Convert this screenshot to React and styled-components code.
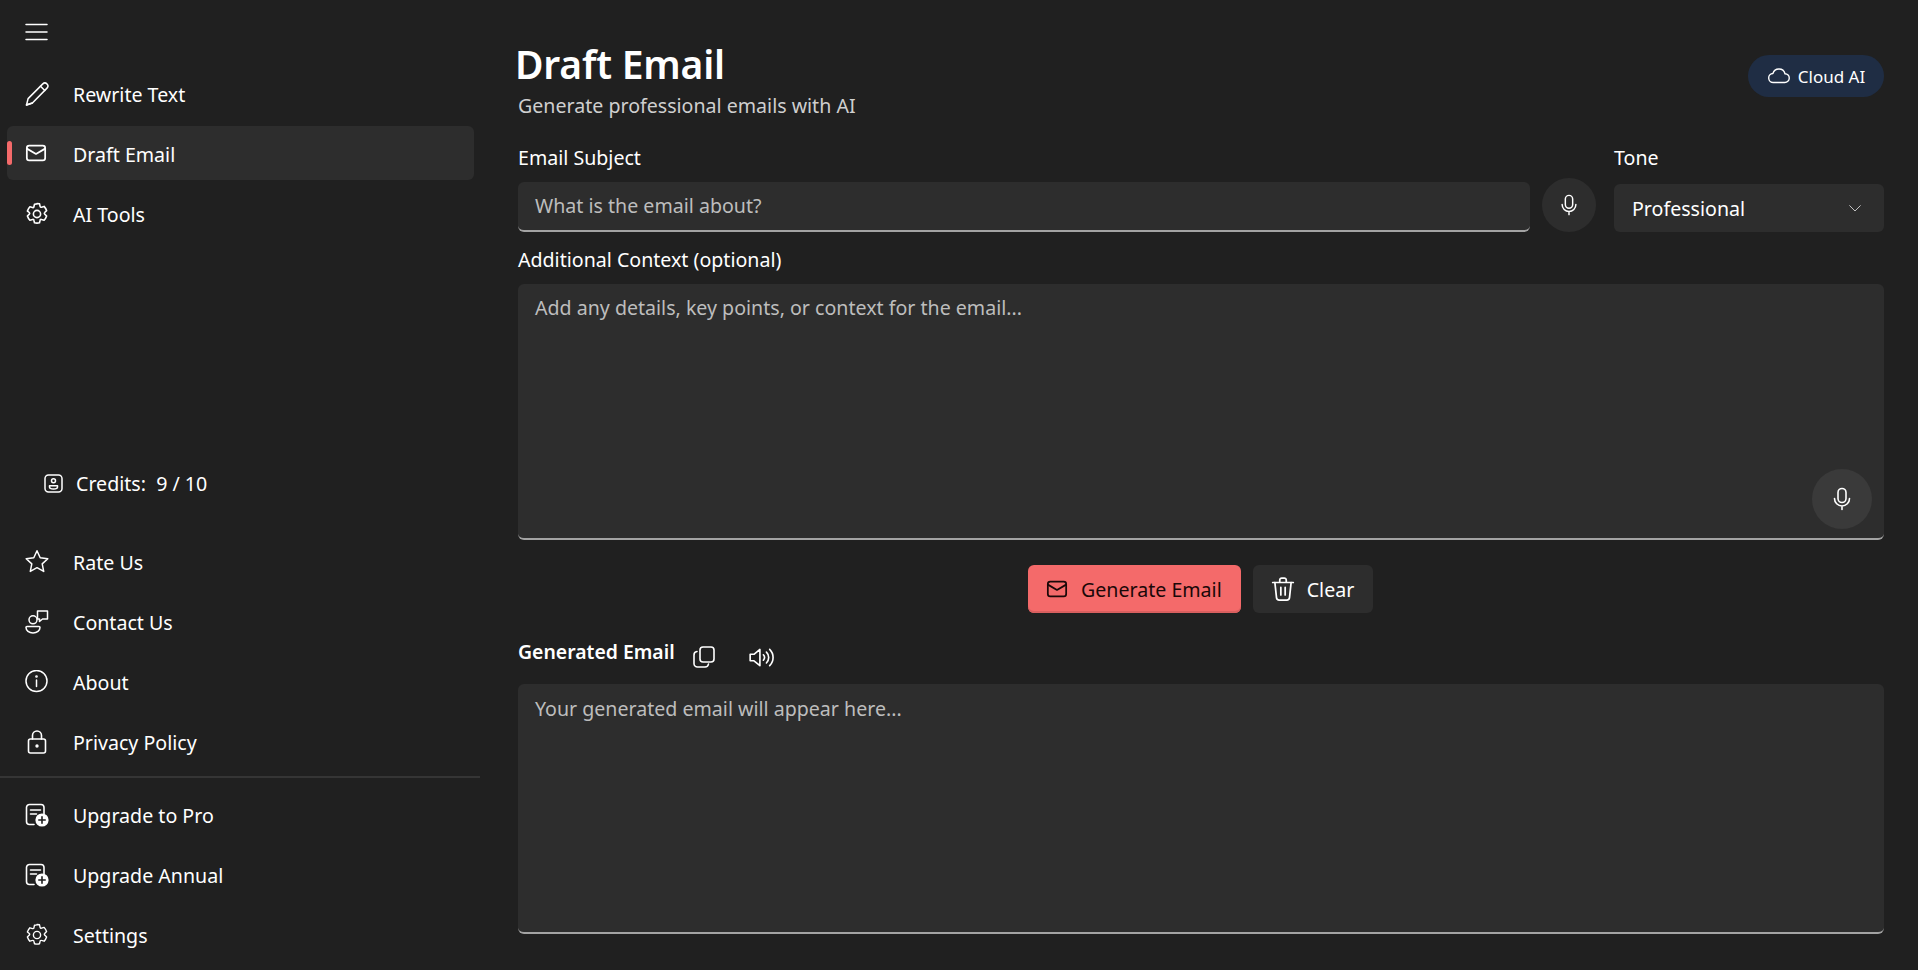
import React from 'react';
import styled, { createGlobalStyle } from 'styled-components';

const Global = createGlobalStyle`
  html, body { margin: 0; padding: 0; background: #202020; }
  body { font-family: "Noto Sans", "Open Sans", sans-serif; color: #fff; }
  * { box-sizing: border-box; }
`;

const Page = styled.div`
  display: flex;
  width: 1918px;
  height: 970px;
  overflow: hidden;
  background: #202020;
`;

const Sidebar = styled.nav`
  width: 480px;
  flex: none;
  display: flex;
  flex-direction: column;
  padding-top: 14px;
`;

const MenuButton = styled.div`
  height: 36px;
  padding-left: 25px;
  display: flex;
  align-items: center;
  margin-bottom: 16px;
`;

const NavGroup = styled.div`
  display: flex;
  flex-direction: column;
  gap: 6px;
  padding: 0 6px 0 7px;
`;

const NavItem = styled.div`
  position: relative;
  height: 54px;
  width: 467px;
  display: flex;
  align-items: center;
  padding: ${p => (p.$drop ? '2px' : '0')} 0 0 18px;
  border-radius: 6px;
  background: ${p => (p.$active ? '#2d2d2d' : 'transparent')};
  font-size: 19.6px;
  color: #fff;
  white-space: nowrap;
`;

const ActiveMark = styled.span`
  position: absolute;
  left: 0;
  top: 15px;
  width: 5px;
  height: 24px;
  border-radius: 3px;
  background: #f46a6a;
`;

const NavIcon = styled.span`
  width: 24px;
  height: 24px;
  margin-right: 24px;
  display: flex;
  flex: none;
`;

const Credits = styled.div`
  margin-top: auto;
  margin-bottom: 39px;
  padding-left: 44px;
  display: flex;
  align-items: center;
  gap: 13px;
  font-size: 19.6px;
  height: 26px;
  white-space: pre;
`;

const Divider = styled.div`
  height: 2px;
  width: 480px;
  margin: 7px 0 10px;
  background: #353535;
`;

const BottomPad = styled.div`
  height: 8px;
`;

const Main = styled.main`
  flex: 1;
  min-width: 0;
  display: flex;
  flex-direction: column;
  padding: 38px 34px 36px 38px;
`;

const Header = styled.header`
  display: flex;
  justify-content: space-between;
  height: 83px;
  margin-bottom: 24px;
`;

const Title = styled.h1`
  margin: 0 0 0 -3px;
  font-size: 39px;
  line-height: 52px;
  font-weight: 600;
  letter-spacing: -0.2px;
`;

const Subtitle = styled.p`
  margin: 3px 0 0;
  font-size: 19.6px;
  line-height: 26px;
  color: #cfcfcf;
  white-space: nowrap;
`;

const Pill = styled.div`
  margin-top: 17px;
  height: 42px;
  width: 136px;
  border-radius: 21px;
  background: #1f2d44;
  display: flex;
  align-items: center;
  justify-content: center;
  gap: 7px;
  font-size: 17px;
  white-space: nowrap;
`;

const SubjectRow = styled.div`
  display: flex;
  align-items: flex-end;
  gap: 12px;
`;

const Field = styled.div`
  display: flex;
  flex-direction: column;
  flex: ${p => (p.$grow ? 1 : 'none')};
  width: ${p => p.$width || 'auto'};
  min-width: 0;
`;

const Label = styled.label`
  display: block;
  height: 24px;
  line-height: 26px;
  font-size: 19.6px;
  margin-bottom: ${p => p.$gap || 13}px;
  white-space: nowrap;
`;

const TextBox = styled.div`
  position: relative;
  height: ${p => p.$height}px;
  padding: ${p => p.$pad || '11px 17px'};
  border-radius: 6px;
  background: #2d2d2d;
  border-bottom: 2px solid #a3a3a3;
  color: #bdbdbd;
  font-size: 19.6px;
  line-height: 26px;
  white-space: nowrap;
`;

const RoundButton = styled.div`
  width: ${p => p.$size}px;
  height: ${p => p.$size}px;
  border-radius: 50%;
  flex: none;
  background: ${p => p.$bg};
  color: #fff;
  display: flex;
  align-items: center;
  justify-content: center;
`;

const SubjectMic = styled(RoundButton)`
  margin-right: 6px;
`;

const FloatMic = styled(RoundButton)`
  position: absolute;
  right: 12px;
  bottom: 9px;
`;

const Select = styled.div`
  height: 48px;
  border-radius: 6px;
  background: #2d2d2d;
  padding: 0 21px 0 18px;
  display: flex;
  align-items: center;
  justify-content: space-between;
  font-size: 19.6px;
`;

const ContextField = styled(Field)`
  margin-top: 15px;
`;

const Actions = styled.div`
  margin-top: 25px;
  display: flex;
  justify-content: flex-start;
  padding-left: 510px;
  gap: 12px;
`;

const ActionButton = styled.div`
  height: 48px;
  padding: 0 ${p => p.$right}px 0 ${p => p.$left}px;
  border-radius: 6px;
  display: flex;
  align-items: center;
  gap: ${p => p.$gap}px;
  font-size: 19.6px;
  white-space: nowrap;
  background: ${p => (p.$primary ? '#f46a6a' : '#2d2d2d')};
  color: ${p => (p.$primary ? '#1a0808' : '#fff')};
  box-shadow: ${p => (p.$primary ? 'inset 0 -2px 0 #d95f5f' : 'none')};
`;

const OutputHead = styled.div`
  margin-top: 27px;
  height: 26px;
  display: flex;
  align-items: center;
  margin-bottom: 18px;
`;

const OutputLabel = styled.span`
  font-size: 19.4px;
  font-weight: 600;
  margin-right: 17px;
  margin-top: -4px;
`;

const IconSlot = styled.span`
  display: flex;
  margin-top: 8px;
  margin-right: ${p => p.$mr || 0}px;
`;

const Svg = ({ size = 24, sw = 1.6, children, color = 'currentColor', vb = 24 }) => (
  <svg width={size} height={size} viewBox={`0 0 ${vb} ${vb}`} fill="none" stroke={color} strokeWidth={sw} strokeLinecap="round" strokeLinejoin="round">
    {children}
  </svg>
);

const Hamburger = () => (
  <Svg sw={1.5}>
    <path d="M1 4.500h21M1 12h21M1 19.500h21" />
  </Svg>
);
const Pencil = () => (
  <Svg sw={1.5}>
    <path d="M1.500 23l1.600-6.400L17.800 1.900a2.900 2.900 0 0 1 4.100 0l.1.1a2.900 2.900 0 0 1 0 4.100L7.400 21z" />
    <path d="M15.500 4.200l4.300 4.300M1.500 23l5.900-2" />
  </Svg>
);
const Mail = ({ size = 22 }) => (
  <Svg size={size} sw={1.9}>
    <rect x="2" y="4" width="20" height="16" rx="2.600" />
    <path d="M2.500 7.500L12 13l9.500-5.500" />
  </Svg>
);
const Gear = ({ sw = 1.6 }) => (
  <Svg sw={sw}>
    <path d="M12 1.500c.9 0 1.700.1 2.500.3l.6 2.600c.1.6.8 1 1.400.8l2.600-.8c1.100 1.200 2 2.600 2.500 4.200l-1.900 1.900c-.5.4-.5 1.200 0 1.600l1.900 1.900c-.5 1.600-1.400 3-2.500 4.200l-2.600-.8c-.6-.2-1.300.2-1.400.8l-.6 2.600c-1.600.4-3.400.4-5 0l-.6-2.600c-.1-.6-.8-1-1.400-.8l-2.600.8c-1.100-1.200-2-2.600-2.500-4.200l1.900-1.900c.5-.4.5-1.200 0-1.600L2.400 9c.5-1.600 1.400-3 2.500-4.200l2.600.8c.6.2 1.300-.2 1.400-.8l.6-2.600c.8-.2 1.600-.3 2.500-.3z" />
    <circle cx="12" cy="12" r="3.600" />
  </Svg>
);
const Star = () => (
  <Svg sw={1.5}>
    <path d="M12 .8l3.200 7 7.600.9-5.600 5.200 1.500 7.500L12 17.700l-6.700 3.700 1.500-7.500L1.200 8.700l7.600-.9z" />
  </Svg>
);
const Contact = () => (
  <Svg sw={1.5}>
    <circle cx="8" cy="9.800" r="4" />
    <path d="M2 16.500h12a1 1 0 0 1 1 1c0 3-3 5.500-7 5.500s-7-2.500-7-5.500a1 1 0 0 1 1-1z" />
    <path d="M12.500 1h10v8h-5l-3 2.500V9h-2z" />
  </Svg>
);
const Info = () => (
  <Svg sw={1.5}>
    <circle cx="11.500" cy="11" r="10.500" />
    <path d="M11.500 10v6.500" />
    <circle cx="11.500" cy="6.500" r=".6" />
  </Svg>
);
const Lock = () => (
  <Svg sw={1.6}>
    <rect x="3.500" y="9" width="17" height="14" rx="2" />
    <path d="M7.500 9V5.500a4.500 4.500 0 0 1 9 0V9" />
    <circle cx="12" cy="16" r=".9" fill="currentColor" />
  </Svg>
);
const Upgrade = () => (
  <Svg sw={1.6}>
    <path d="M9 21.500H4.500A3 3 0 0 1 1.500 18.500V4.500A3 3 0 0 1 4.500 1.500H16A3 3 0 0 1 19 4.500V11" />
    <path d="M5.500 7h10M5.500 11h6" />
    <circle cx="17" cy="17" r="6.600" fill="#fff" stroke="none" />
    <path d="M17 13.800v6.400M13.800 17h6.400" stroke="#202020" />
  </Svg>
);
const CreditIcon = () => (
  <Svg size={19} vb={19} sw={1.5}>
    <rect x="1" y="1" width="17" height="17" rx="3.500" />
    <circle cx="9.500" cy="6.800" r="2" />
    <path d="M5.500 11.800h8v1.200c0 1.400-1.800 2-4 2s-4-.6-4-2z" />
  </Svg>
);
const Cloud = () => (
  <Svg size={24} sw={1.4}>
    <path d="M6.500 18.500a4.500 4.500 0 0 1-.6-9A6.300 6.300 0 0 1 18 9.700a4.400 4.400 0 0 1-.3 8.800z" />
  </Svg>
);
const Mic = ({ size = 22 }) => (
  <Svg size={size} sw={1.6}>
    <rect x="8" y="1.500" width="8" height="14" rx="4" />
    <path d="M4.500 11.500a7.500 7.500 0 0 0 15 0M12 19v3.500" />
  </Svg>
);
const Chevron = () => (
  <Svg size={16} sw={1.3} color="#d8d8d8">
    <path d="M4 8.500l8 8 8-8" />
  </Svg>
);
const Trash = () => (
  <Svg size={26} sw={1.6}>
    <path d="M2.500 6h19M9 6V3.800A1.800 1.800 0 0 1 10.800 2h2.400A1.800 1.800 0 0 1 15 3.800V6" />
    <path d="M4.500 6l1.500 14a2.500 2.500 0 0 0 2.500 2.200h7A2.500 2.500 0 0 0 18 20l1.500-14" />
    <path d="M10 10.500v7M14 10.500v7" />
  </Svg>
);
const Copy = () => (
  <Svg size={24} sw={1.6}>
    <rect x="8" y="2" width="14" height="15" rx="3" />
    <path d="M5 6.500A3.500 3.500 0 0 0 2 10v8.500A3.500 3.500 0 0 0 5.500 22H13a3.500 3.500 0 0 0 3.500-3" />
  </Svg>
);
const Speaker = () => (
  <Svg size={26} sw={1.5}>
    <path d="M2 9.500h3.500L11 5v15l-5.500-4.500H2z" />
    <path d="M14.200 10a3.800 3.800 0 0 1 0 5M17 7.500a7 7 0 0 1 0 10M20 5a10.500 10.500 0 0 1 0 15" />
  </Svg>
);

const topItems = [
  { label: 'Rewrite Text', icon: <Pencil /> },
  { label: 'Draft Email', icon: <Mail />, active: true },
  { label: 'AI Tools', icon: <Gear /> },
];
const midItems = [
  { label: 'Rate Us', icon: <Star /> },
  { label: 'Contact Us', icon: <Contact /> },
  { label: 'About', icon: <Info /> },
  { label: 'Privacy Policy', icon: <Lock /> },
];
const lowItems = [
  { label: 'Upgrade to Pro', icon: <Upgrade /> },
  { label: 'Upgrade Annual', icon: <Upgrade /> },
  { label: 'Settings', icon: <Gear sw={1.4} /> },
];

const Items = ({ items, drop }) => (
  <NavGroup>
    {items.map(it => (
      <NavItem key={it.label} $active={it.active} $drop={drop}>
        {it.active && <ActiveMark />}
        <NavIcon>{it.icon}</NavIcon>
        {it.label}
      </NavItem>
    ))}
  </NavGroup>
);

export default function App() {
  return (
    <Page>
      <Global />
      <Sidebar>
        <MenuButton><Hamburger /></MenuButton>
        <Items items={topItems} drop />
        <Credits><CreditIcon /><span>Credits:  9 / 10</span></Credits>
        <Items items={midItems} />
        <Divider />
        <Items items={lowItems} />
        <BottomPad />
      </Sidebar>
      <Main>
        <Header>
          <div>
            <Title>Draft Email</Title>
            <Subtitle>Generate professional emails with AI</Subtitle>
          </div>
          <Pill><Cloud />Cloud AI</Pill>
        </Header>
        <SubjectRow>
          <Field $grow>
            <Label>Email Subject</Label>
            <TextBox $height={50} $pad="11px 17px">What is the email about?</TextBox>
          </Field>
          <SubjectMic $size={54} $bg="#2d2d2d"><Mic /></SubjectMic>
          <Field $width="270px">
            <Label $gap={15}>Tone</Label>
            <Select>Professional<Chevron /></Select>
          </Field>
        </SubjectRow>
        <ContextField>
          <Label>Additional Context (optional)</Label>
          <TextBox $height={256}>
            Add any details, key points, or context for the email...
            <FloatMic $size={60} $bg="#3a3a3a"><Mic size={24} /></FloatMic>
          </TextBox>
        </ContextField>
        <Actions>
          <ActionButton $primary $left={18} $right={19} $gap={13}><Mail />Generate Email</ActionButton>
          <ActionButton $left={17} $right={19} $gap={11}><Trash />Clear</ActionButton>
        </Actions>
        <OutputHead>
          <OutputLabel>Generated Email</OutputLabel>
          <IconSlot $mr={32}><Copy /></IconSlot>
          <IconSlot><Speaker /></IconSlot>
        </OutputHead>
        <TextBox $height={250} $pad="12px 17px">Your generated email will appear here...</TextBox>
      </Main>
    </Page>
  );
}
